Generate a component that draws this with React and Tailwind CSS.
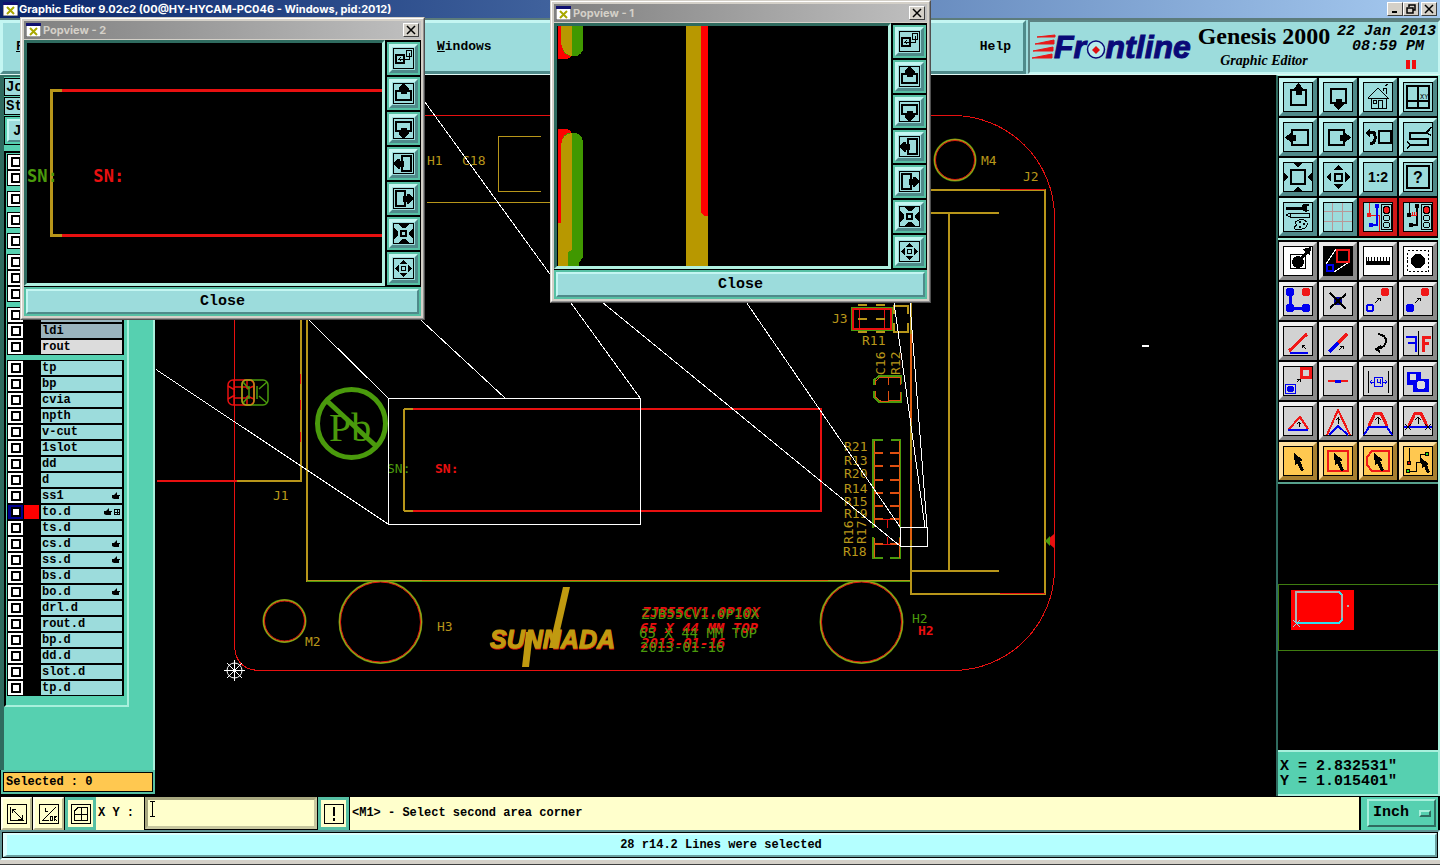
import React from 'react'

const mono = "font-['Liberation_Mono','Courier_New',monospace]"
const cad = "font-['DejaVu_Sans_Mono',monospace]"
const raised = 'border-t-[#c4f6f2] border-l-[#c4f6f2] border-b-[#4f8a8a] border-r-[#4f8a8a]'

const GOLD = '#b8961a'
const RED = '#e81010'
const GREEN = '#4a9a0c'

/* ---------- toolbar glyphs, 30x30 grid ---------- */

const K = '#000'
const B = '#0000f0'
const R = '#f01818'

const tools = [
  { name: 'Pan up', art: <><path d="M8 8h15v15H8z" fill="none" stroke={K} strokeWidth="2" /><path d="M15.500 1l5 6v2h-2v4h-6V9h-2V7z" /></> },
  { name: 'Pan down', art: <><path d="M8 7h15v14H8z" fill="none" stroke={K} strokeWidth="2" /><path d="M15.500 28l5-5v-2h-2v-4h-6v4h-2v2z" /></> },
  {
    name: 'Home',
    art: (
      <g fill="none" stroke={K}>
        <path d="M5 16L15 6l10 10H5M8 16v10h15V16M15 26v-8h4v8M10 18h3v3h-3zM20 9V6h3v6M22 4l3-2" />
      </g>
    ),
  },
  { name: 'Coordinates', art: <><path d="M4 4h22v22H4zM15 4v22M4 19h22" fill="none" stroke={K} strokeWidth="1.500" /><text x="17" y="17" fontSize="7" fontFamily="Liberation Mono">XY</text></> },
  { name: 'Pan left', art: <><path d="M9 8h16v15H9z" fill="none" stroke={K} strokeWidth="2" /><path d="M2 15.500l6-5h2v2h3v6h-3v2H8z" /></> },
  { name: 'Pan right', art: <><path d="M6 8h15v15H6z" fill="none" stroke={K} strokeWidth="2" /><path d="M28 15.500l-6-5h-2v2h-3v6h3v2h2z" /></> },
  { name: 'Previous view', art: <><path d="M16 9h12v12H16z" fill="none" stroke={K} strokeWidth="2" /><path d="M5 10h4q3 0 3 4v3q0 4-5 5" fill="none" stroke={K} strokeWidth="3" /><path d="M2 11l5-5v9z" /></> },
  { name: 'Snake', art: <path d="M26 8l-3 3H7v6h18v6H8l-4-3M26 8l2-3M23 11l5 2M8 23l-4 3" fill="none" stroke={K} strokeWidth="1.500" /> },
  { name: 'Zoom out', art: <><path d="M8 8h14v14H8z" fill="none" stroke={K} strokeWidth="2" /><path d="M10 1h10l-5 4zM10 29h10l-5-4zM1 10v10l4-5zM29 10v10l-4-5z" /></> },
  { name: 'Zoom in', art: <><path d="M11.500 11.500h7v7h-7z" fill="none" stroke={K} strokeWidth="2" /><path d="M10 8h10l-5-5zM10 22h10l-5 5zM8 10v10l-5-5zM22 10v10l5-5z" /></> },
  { name: 'Scale 1:2', art: <text x="15" y="20" textAnchor="middle" fontSize="14" fontWeight="bold" fontFamily="Liberation Sans">1:2</text> },
  { name: 'Help', art: <><path d="M4 4h22v22H4z" fill="none" stroke={K} strokeWidth="1.500" /><text x="15" y="21" textAnchor="middle" fontSize="16" fontWeight="bold" fontFamily="Liberation Sans">?</text></> },
  {
    name: 'Options',
    art: (
      <>
        <path d="M3 5h16v2H3zM19 4q3-3 7-1h-3v5h3q-4 3-7-1z" stroke={K} />
        <path d="M3 13l4-2h19v4H7zM7 11v4" fill="none" stroke={K} />
        <path d="M12 20q7-5 12 0 1 6-5 7-8 2-8-2 4-1 1-5z" fill="none" stroke={K} />
        <circle cx="17" cy="20" r="1" /><circle cx="21" cy="22" r="1" /><circle cx="17" cy="25" r="1" />
      </>
    ),
  },
  { name: 'Grid', art: <path d="M9.500 1v28M19.500 1v28M1 9.500h28M1 19.500h28" stroke="#b89898" strokeWidth="1" /> },
  {
    name: 'Net display',
    tone: 'alert',
    art: (
      <>
        <path d="M6.500 1v12M6 13.500h10.500V29" fill="none" stroke={R} />
        <path d="M14 4v19H8" fill="none" stroke={B} strokeWidth="1.500" />
        <circle cx="14" cy="4" r="2.500" fill={B} /><circle cx="6" cy="13" r="2.500" fill={R} /><circle cx="8" cy="23" r="2.500" fill={B} />
        <path d="M18.500 2.500h10v25h-10z" fill="none" stroke={K} />
        <circle cx="23.500" cy="8" r="3.500" fill={R} stroke={K} /><circle cx="23.500" cy="16" r="3" fill="none" stroke={K} /><circle cx="23.500" cy="23" r="3" fill="none" stroke={K} />
      </>
    ),
  },
  {
    name: 'Net check',
    tone: 'alert',
    art: (
      <>
        <path d="M6.500 1v12M14 4v19H8" fill="none" stroke={K} strokeWidth="1.500" />
        <path d="M8 13.500h6M9.500 10v3M11.500 10v3M13.500 10v3" fill="none" stroke={R} />
        <circle cx="14" cy="4" r="2.500" /><circle cx="6" cy="13" r="2.500" /><circle cx="8" cy="23" r="2.500" />
        <path d="M18.500 2.500h10v25h-10z" fill="none" stroke={K} />
        <circle cx="23.500" cy="8" r="3.500" fill={R} stroke={K} /><circle cx="23.500" cy="16" r="3" fill="none" stroke={K} /><circle cx="23.500" cy="23" r="3" fill="none" stroke={K} />
      </>
    ),
  },
]

const editTools = [
  { name: 'Select feature', tone: 'white', art: <><path d="M7.500 8.500h15v14h-15z" fill="none" stroke={K} /><circle cx="15" cy="16" r="6" /><path d="M18 11l4-5-2-3 8-2-1 8-3-1-4 5z" /></> },
  {
    name: 'Popview',
    tone: 'white',
    art: (
      <>
        <path d="M1 1h28v28H1z" />
        <path d="M3 18L13 3M11 26l15-10" stroke="#fff" />
        <path d="M14 4h12v12H14z" fill="none" stroke={R} strokeWidth="2" />
        <path d="M4 19h6v6H4z" fill="none" stroke={B} strokeWidth="2" />
      </>
    ),
  },
  { name: 'Measure', tone: 'white', art: <path d="M3 11v8h24v-8h-1v4h-2v-4h-1v4h-2v-4h-1v4h-2v-4h-1v4h-2v-4h-1v4h-2v-4h-1v4H9v-4H8v4H6v-4H5v4H4v-4z" /> },
  { name: 'Select area', tone: 'white', art: <><path d="M4.500 4.500h21v21h-21z" fill="none" stroke={K} strokeDasharray="2 2" /><circle cx="15" cy="15" r="7" /></> },
  { name: 'Connect', art: <><path d="M7.500 6v15M7 22.500h16" stroke={B} strokeWidth="3" /><circle cx="7" cy="6" r="4.500" fill={B} /><circle cx="23" cy="6" r="4.500" fill={R} /><circle cx="7" cy="22" r="4.500" fill={B} /><circle cx="23" cy="22" r="4.500" fill={B} /></> },
  { name: 'Delete', art: <><circle cx="15" cy="15" r="4.500" fill="#0000a0" /><path d="M7 7l16 16M23 8L7 22" stroke={K} strokeWidth="2" /></> },
  { name: 'Move', art: <><circle cx="22" cy="6" r="4.500" fill={R} /><circle cx="7" cy="22" r="3.500" fill="none" stroke={B} strokeWidth="2" /><path d="M12 17l5-5M14 12h3v3" fill="none" stroke={K} /></> },
  { name: 'Copy', art: <><circle cx="22" cy="6" r="4.500" fill={R} /><circle cx="7" cy="22" r="4.500" fill={B} /><path d="M12 17l5-5M14 12h3v3" fill="none" stroke={K} /></> },
  { name: 'Rotate line', art: <><path d="M6 25L24 8" stroke={R} strokeWidth="3" /><path d="M7 27h18" stroke={B} strokeWidth="2" /><path d="M23 23l-4-4M19 22v-3h3" fill="none" stroke={K} /></> },
  { name: 'Stretch line', art: <><path d="M6 26l9-9" stroke={B} strokeWidth="3" /><path d="M15 17l9-9" stroke={R} strokeWidth="3" /><path d="M16 24l4-4M17 20h3v3" fill="none" stroke={K} /></> },
  { name: 'Rotate', art: <path d="M15 8q8 1 8 7t-9 8M18 20l-5 3 4 3" fill="none" stroke={K} strokeWidth="2" /> },
  { name: 'Mirror', art: <><path d="M15.500 5v24" stroke={K} /><path d="M3 11h9M12.500 10v16M5 17h7" fill="none" stroke={B} strokeWidth="2" /><path d="M28 11h-8M20 10v16M26 17h-6" fill="none" stroke={R} strokeWidth="3" /></> },
  { name: 'Resize', art: <><path d="M18 2h9v9h-9z" fill="none" stroke={R} strokeWidth="3" /><path d="M2.500 18.500h10v9h-10z" fill="none" stroke={B} /><circle cx="7.500" cy="23" r="3.500" fill={B} /><path d="M14 16l3-3M14 13h3v3" fill="none" stroke={K} /></> },
  { name: 'Break line', art: <><path d="M5 15h20" stroke={R} strokeWidth="2" /><path d="M12 15h6" stroke={B} strokeWidth="3" /></> },
  { name: 'Spacing', art: <><path d="M5.500 5v22M25.500 5v22" stroke={K} /><path d="M7 16.500h5M19 16.500h5M9 14l-2 2 2 2M22 14l2 2-2 2M11.500 11.500h8v9h-8zM14 13v3h3v-3v5" fill="none" stroke={B} /></> },
  { name: 'Substitute', art: <><path d="M4 6h14v7h8v13H10v-7H4z" fill={B} /><circle cx="10" cy="11" r="3.500" fill="#dcdcdc" /><circle cx="18" cy="19" r="4.500" fill="#dcdcdc" /></> },
  { name: 'Angle low', art: <><path d="M6 23l11-12 8 12" fill="none" stroke={R} strokeWidth="2" /><path d="M5 24h20" stroke={B} strokeWidth="2" /><path d="M16 21v-5M14 18l2-2 2 2" fill="none" stroke={K} /></> },
  { name: 'Angle high', art: <><path d="M4 29L15 4l12 25" fill="none" stroke={R} strokeWidth="2" /><path d="M6 29l9-9 10 9" fill="none" stroke={B} strokeWidth="2" /><path d="M15.500 18v-7M13 14l2-2 2 2" fill="none" stroke={K} /></> },
  { name: 'Trapezoid', art: <><path d="M6 20L12 7h6l6 13" fill="none" stroke={R} strokeWidth="3" /><path d="M1 29l5-8h18l5 8" fill="none" stroke={B} strokeWidth="2" /><path d="M15.500 18v-7M12 14l3-3 3 3" fill="none" stroke={K} /></> },
  { name: 'Trapezoid cut', art: <><path d="M6 20L12 7h6l6 13" fill="none" stroke={R} strokeWidth="3" /><path d="M1 21h28" stroke={B} strokeWidth="2" /><path d="M15.500 18v-7M12 14l3-3 3 3M2 18l6 6M8 18l-6 6M22 18l6 6M28 18l-6 6" fill="none" stroke={K} /></> },
  { name: 'Pick', tone: 'amber', art: <path d="M11 7l9 7-3 1 4 9-3 1-4-8-2 3z" /> },
  { name: 'Pick in box', tone: 'amber', art: <><path d="M5 5h20v20H5z" fill="none" stroke={R} strokeWidth="2" /><path d="M11 7l9 7-3 1 4 9-3 1-4-8-2 3z" /></> },
  { name: 'Pick in polygon', tone: 'amber', art: <><path d="M9 5h17v20H9l-5-6v-8z" fill="none" stroke={R} strokeWidth="2" /><path d="M11 7l9 7-3 1 4 9-3 1-4-8-2 3z" /></> },
  {
    name: 'Pick net',
    tone: 'amber',
    art: (
      <>
        <path d="M6.500 2v14M5 25.500h8.500v-9h4v-8H25" fill="none" stroke={K} />
        <circle cx="6" cy="17" r="2" fill="#d00000" stroke={K} /><circle cx="5" cy="25" r="2" fill="#20e020" stroke={K} /><circle cx="24" cy="8" r="2" fill="#20e020" stroke={K} />
        <path d="M18 12l8 6-2 1 3 7-3 1-3-7-2 3z" />
      </>
    ),
  },
]

const tones = {
  face: `bg-[#9cdcdc] ${raised}`,
  alert: 'bg-[#9cdcdc] border-[#d01818]',
  grey: 'bg-[#d2d2d2] border-t-[#f0f0f0] border-l-[#f0f0f0] border-b-[#8a8a8a] border-r-[#8a8a8a]',
  white: 'bg-white border-t-[#e8e8e8] border-l-[#e8e8e8] border-b-[#8a8a8a] border-r-[#8a8a8a]',
  amber: 'bg-[#ffc850] border-t-[#ffe0a0] border-l-[#ffe0a0] border-b-[#a88030] border-r-[#a88030]',
}

function ToolButton({ tool, fallback }) {
  return (
    <button type="button" aria-label={tool.name} className={`h-[38px] border-4 ${tones[tool.tone || fallback]}`}>
      <svg viewBox="0 0 30 30" className="block h-[30px] w-[30px]" shapeRendering="crispEdges">
        <rect x="0.500" y="0.500" width="29" height="29" fill="none" stroke={K} />
        {tool.art}
      </svg>
    </button>
  )
}

/* ---------- popview windows ---------- */

const viewTools = [
  { name: 'Pop out', art: <><path d="M3 7h8v8H3z" fill="none" stroke={K} strokeWidth="2" /><path d="M13.500 2.500h5v6h-5zM5 11.500h11.500V5M8 9l-2 2 2 2" fill="none" stroke={K} /></> },
  { name: 'Up', art: <><path d="M3 8h15v9H3z" fill="none" stroke={K} strokeWidth="2" /><path d="M10.500 0l5 5v2h-2v4h-6V7h-2V5z" /></> },
  { name: 'Down', art: <><path d="M3 4h15v9H3z" fill="none" stroke={K} strokeWidth="2" /><path d="M10.500 21l5-5v-2h-2v-4h-6v4h-2v2z" /></> },
  { name: 'Left', art: <><path d="M9 3h9v15H9z" fill="none" stroke={K} strokeWidth="2" /><path d="M0 10.500l5-5h2v2h4v6H7v2H5z" /></> },
  { name: 'Right', art: <><path d="M3 3h9v15H3z" fill="none" stroke={K} strokeWidth="2" /><path d="M21 10.500l-5-5h-2v2h-4v6h4v2h2z" /></> },
  { name: 'Zoom out', art: <><path d="M8 8h5v5H8z" fill="none" stroke={K} strokeWidth="2" /><path d="M5 1h11l-4 4H9zM5 20h11l-4-4H9zM1 5v11l4-4V9zM20 5v11l-4-4V9z" /></> },
  { name: 'Zoom in', art: <><path d="M8.500 8.500h4v4h-4z" fill="none" stroke={K} /><path d="M7 6h7l-3-4h-1zM7 15h7l-3 4h-1zM6 7v7l-4-3v-1zM15 7v7l4-3v-1z" /></> },
]

function AppIcon() {
  return (
    <svg viewBox="0 0 15 14" className="h-[14px] w-[15px] shrink-0">
      <rect width="15" height="14" fill="#fff" stroke="#444" />
      <rect width="15" height="3" fill="#101070" />
      <path d="M4 5l7 7M11 5l-7 7" stroke="#a8a800" strokeWidth="2" />
    </svg>
  )
}

function WinButton({ label, children }) {
  return (
    <button
      type="button"
      aria-label={label}
      className="flex h-[14px] w-4 items-center justify-center border border-t-white border-l-white border-b-[#404040] border-r-[#404040] bg-[#d4d0c8]"
    >
      <svg viewBox="0 0 10 10" className="h-[10px] w-[10px]" fill="none" stroke="#000" strokeWidth="1.500">
        {children}
      </svg>
    </button>
  )
}

function Popview({ title, place, viewBox, children }) {
  return (
    <section
      aria-label={title}
      className={`absolute flex h-[303px] flex-col border border-t-[#d4d0c8] border-l-[#d4d0c8] border-b-[#505050] border-r-[#505050] bg-[#d4d0c8] ${place}`}
    >
      <div className="flex grow flex-col border border-t-white border-l-white border-b-[#909090] border-r-[#909090] p-[2px]">
        <header className="flex h-[18px] items-center bg-linear-to-r from-[#808080] to-[#c0c0c0] px-[2px]">
          <AppIcon />
          <h2 className="grow pl-[2px] font-['Inter',sans-serif] text-[11px] leading-[18px] font-bold text-[#d4d0c8]">{title}</h2>
          <WinButton label="Close window"><path d="M1 1l8 8M9 1L1 9" /></WinButton>
        </header>
        <div className="mt-px flex grow flex-col bg-black">
          <div className="flex grow">
            <div className="h-[246px] min-w-0 grow border-[3px] border-t-[#2f6b5f] border-l-[#2f6b5f] border-b-[#b0f0e0] border-r-[#b0f0e0]">
              <svg viewBox={viewBox} preserveAspectRatio="xMinYMin slice" className="block h-full w-full" shapeRendering="crispEdges">
                {children}
              </svg>
            </div>
            <div className="flex w-[36px] flex-col items-center gap-[2px] pt-[2px]">
              {viewTools.map((tool) => (
                <button key={tool.name} type="button" aria-label={tool.name} className="h-[33px] w-[33px] border-2 border-[#56c0a4]">
                  <span className={`flex h-full items-center justify-center border-[3px] bg-[#9cdcdc] ${raised}`}>
                    <svg viewBox="0 0 21 21" className="h-[21px] w-[21px]" shapeRendering="crispEdges">
                      <rect x="0.500" y="0.500" width="20" height="20" fill="none" stroke={K} />
                      {tool.art}
                    </svg>
                  </span>
                </button>
              ))}
            </div>
          </div>
          <button type="button" className="h-[29px] border-2 border-[#56c0a4]">
            <span className={`block border-2 bg-[#9cdcdc] text-[15px] leading-[21px] font-bold ${raised} ${mono}`}>Close</span>
          </button>
        </div>
      </div>
    </section>
  )
}

/* ---------- layer list ---------- */

const layerGroups = [
  [{}, {}],
  [{}],
  [{}],
  [{}],
  [{}, {}, {}],
  [{ tint: 'bg-[#9ab4be]' }, { name: 'ldi', tint: 'bg-[#9ab4be]' }, { name: 'rout', tint: 'bg-[#dcdcdc]' }],
  [
    { name: 'tp' },
    { name: 'bp' },
    { name: 'cvia' },
    { name: 'npth' },
    { name: 'v-cut' },
    { name: '1slot' },
    { name: 'dd' },
    { name: 'd' },
    { name: 'ss1', hand: true },
    { name: 'to.d', hand: true, active: true },
    { name: 'ts.d' },
    { name: 'cs.d', hand: true },
    { name: 'ss.d', hand: true },
    { name: 'bs.d' },
    { name: 'bo.d', hand: true },
    { name: 'drl.d' },
    { name: 'rout.d' },
    { name: 'bp.d' },
    { name: 'dd.d' },
    { name: 'slot.d' },
    { name: 'tp.d' },
  ],
]

function LayerRow({ layer }) {
  return (
    <label className="flex h-4 items-center bg-black">
      <span className={`ml-px flex h-[14px] w-[15px] items-center justify-center ${layer.active ? 'bg-[#000090]' : 'bg-white'}`}>
        <input type="checkbox" aria-label={layer.name || 'layer'} className="block h-[10px] w-[10px] appearance-none border-2 border-black bg-white" />
      </span>
      <span className={`ml-px h-[14px] w-[15px] ${layer.active ? 'bg-[#ff0000]' : ''}`} />
      <span className={`ml-[2px] flex h-[14px] w-[81px] items-center gap-[2px] pr-[2px] pl-px ${layer.tint || 'bg-[#9cdcdc]'}`}>
        <span className={`grow text-[12px] leading-[14px] font-bold ${mono}`}>{layer.name}</span>
        {layer.hand && (
          <svg viewBox="0 0 8 8" className="h-2 w-2"><path d="M0 3h2l3-3v3h3v1H7v3H2L0 6z" /></svg>
        )}
        {layer.active && (
          <svg viewBox="0 0 6 6" className="h-[6px] w-[6px]" shapeRendering="crispEdges"><path d="M.500.500h5v5h-5zM3 0v6M0 3h6" fill="none" stroke="#000" /></svg>
        )}
      </span>
    </label>
  )
}

function LayerPanel() {
  return (
    <aside className="flex w-[156px] shrink-0 flex-col bg-black pr-px">
      <div className="flex grow flex-col border-t-2 border-r-2 border-l-4 border-t-[#2f6b5f] border-r-[#a8f0dc] border-l-[#2f6b5f] bg-[#56d0b0]">
        <div className={`text-[14px] font-bold ${mono}`}>
          <p className="mt-px h-[18px] border border-black bg-[#9cdcdc] pl-px leading-[16px]">Job</p>
          <p className="mt-px h-[18px] border border-black bg-[#9cdcdc] pl-px leading-[16px]">Step</p>
          <div className="mt-px h-[29px] border border-black p-[2px]">
            <button type="button" className={`h-full w-full border-2 bg-[#9cdcdc] pl-1 text-left leading-[18px] ${raised}`}>Job Matrix</button>
          </div>
        </div>
        <div className="mt-[6px] w-[125px] border-2 border-t-black border-r-[#a8f0dc] border-b-[#a8f0dc] border-l-black bg-[#56d0b0] pb-[9px]">
          <div className="mt-px mr-[3px] ml-px flex flex-col gap-[5px]">
            {layerGroups.map((group, i) => (
              <div key={i}>
                {group.map((layer, j) => (
                  <LayerRow key={j} layer={layer} />
                ))}
              </div>
            ))}
          </div>
        </div>
      </div>
      <p className={`mb-[2px] ml-px border-2 border-[#56c0a4] text-[12px] leading-[18px] font-bold ${mono}`}>
        <span className="block border border-black bg-[#ffc850] pl-[2px]">Selected : 0</span>
      </p>
    </aside>
  )
}

/* ---------- board ---------- */

const goldLabels = [
  ['H1', 427, 165], ['C18', 462, 165], ['M4', 981, 165], ['J2', 1023, 181], ['J1', 273, 500],
  ['M2', 305, 646], ['H3', 437, 631], ['J3', 832, 323], ['R11', 862, 345], ['R21', 844, 451],
  ['R13', 844, 465], ['R20', 844, 478], ['R14', 844, 493], ['R15', 844, 506], ['R19', 844, 518],
  ['R18', 843, 556],
]

const uprightLabels = [
  ['C16', 885, 375], ['R12', 900, 375], ['R16', 853, 544], ['R17', 866, 544],
]

// text, x, green baseline, red baseline
const silkLines = [
  ['ZJB55CV1.0P10X', 641, 619, 617],
  ['65 X 44 MM TOP', 639, 638, 633],
  ['2013-01-16', 640, 652, 648],
]

const padRows = [453, 466, 480, 493, 506, 519, 544]

function Ring({ cx, cy, r }) {
  return (
    <g fill="none">
      <circle cx={cx} cy={cy} r={r} stroke={GREEN} strokeWidth="2" />
      <circle cx={cx} cy={cy} r={r - 1} stroke={RED} strokeWidth="1" />
      <circle cx={cx} cy={cy} r={r} stroke={GOLD} strokeWidth="1" />
    </g>
  )
}

function Board() {
  return (
    <svg viewBox="156 75 1120 721" preserveAspectRatio="xMinYMin meet" className="block h-full w-full" role="img" aria-label="Board layers">
      <g fill="none" shapeRendering="crispEdges">
        <path d="M234.500 115.500V643.500q0 27 26 27H954.500A102 102 0 0 0 1054.500 570.500V214.500A102 102 0 0 0 954.500 115.500H234" stroke={RED} />
        <path d="M307 202V581H911" stroke={GOLD} strokeWidth="2" />
        <path d="M422 580.500H828" stroke="#e06010" />
        <path d="M307 581.500H911" stroke={GREEN} />
        <path d="M301 202V481H237" stroke={GOLD} strokeWidth="2" />
        <path d="M300.500 374v10M300.500 400v10M300.500 432v10" stroke={RED} />
        <path d="M157 481h80" stroke={RED} strokeWidth="2" />
        <path d="M427 202.500H560M541 136H498v55h43" stroke={GOLD} />
        <path d="M911 190h134v404H911zM911 213h88M949 213V571M911 571h88" stroke={GOLD} strokeWidth="2" />
        <path d="M911 334v88M911 460v80" stroke="#e06010" strokeWidth="2" />
        <path d="M1000 189.500h45M1000 593.500h45" stroke={RED} />
        <path d="M404 409v102" stroke={GOLD} strokeWidth="2" />
        <path d="M404 409h9M404 511h9" stroke={GOLD} strokeWidth="2" />
        <path d="M413 409h408v102H413" stroke={RED} strokeWidth="2" />
      </g>

      {/* J3 and the passives next to it */}
      <g fill="none" shapeRendering="crispEdges" strokeWidth="2">
        <path d="M852 308h40v22h-40z" stroke={GREEN} />
        <path d="M853 309h38v20h-38z" stroke={RED} strokeWidth="2" />
        <path d="M859.500 309v20M884.500 309v20" stroke={RED} strokeWidth="1" />
        <path d="M858 305h9M876 305h9M858 332h9M876 332h9M858 319h9M876 319h9" stroke={GOLD} />
        <path d="M894 314v-8h14v8M894 323v9h14v-9" stroke={GOLD} />
        <path d="M874 385v-5l5-4h22v8M874 391v6l5 5h22v-10" stroke={GREEN} />
        <path d="M875.500 385v-4l5-4h8v8M888.500 391v10h-8l-5-4v-6M888 377.500h12v7M888 400.500h12v-9" stroke="#e05010" strokeWidth="1" />
        <path d="M883 440h-10v88M891 440h9v88M873 537v21h10M900 537v21h-10" stroke={GREEN} />
        <path d="M874.500 441v86M899.500 441v86M874.500 538v20M899.500 538v20" stroke="#e06010" strokeWidth="1" />
        {padRows.map((y) => (
          <path key={y} d={`M874 ${y}h9M890 ${y}h10`} stroke="#e05010" strokeWidth="2" />
        ))}
        <path d="M887.500 519v9M887.500 537v7M883 519.500h8M883 544.500h8" stroke={RED} strokeWidth="1" />
      </g>

      {/* edge marker and overlapping pad */}
      <path d="M1050 537.500l4-3.500v14l-4-3.500z" fill={RED} />
      <path d="M1050 536v10l-5-5z" fill={GREEN} />
      <g fill="none" stroke={RED} strokeWidth="1.500">
        <rect x="228" y="380" width="26" height="25" rx="5" />
        <path d="M228 386l7 4M228 399l7-4M234 380v25M247 380v9M247 405v-9M234 387h13M234 398h13M254 386l-7 3M254 399l-7-3" />
      </g>
      <g fill="none" stroke={GREEN} strokeWidth="1.500">
        <rect x="242" y="380" width="26" height="25" rx="5" />
        <path d="M257 386v13M267 382l-8 7M267 403l-8-7M243 382l6 7M243 403l6-7M249 386v13" />
      </g>
      <rect x="242" y="380" width="12" height="25" rx="4" fill="none" stroke={GOLD} strokeWidth="1.500" />

      <g stroke={GREEN} strokeWidth="5" fill="none">
        <circle cx="351.500" cy="423.500" r="34" />
        <path d="M326 400l51 47" />
      </g>
      <text x="329" y="441" fontSize="40" fill={GREEN} fontFamily="Liberation Serif">Pb</text>

      <Ring cx={284.5} cy={621} r={21} />
      <Ring cx={380.5} cy={622} r={41} />
      <Ring cx={861.5} cy={622} r={41} />
      <Ring cx={955} cy={160} r={20.5} />

      <g stroke="#fff" fill="none">
        <circle cx="234.500" cy="670.500" r="7.500" />
        <path d="M224 670.500h21M234.500 660v21M227 663l15 15M242 663l-15 15" />
      </g>

      <g className={cad} fontSize="13" fill={GOLD}>
        {goldLabels.map(([text, x, y]) => (
          <text key={text} x={x} y={y}>{text}</text>
        ))}
        {uprightLabels.map(([text, x, y]) => (
          <text key={text} x={x} y={y} transform={`rotate(-90 ${x} ${y})`}>{text}</text>
        ))}
        <text x="387" y="473" fill={GREEN}>SN:</text>
        <text x="435" y="473" fill={RED} fontWeight="bold">SN:</text>
        <text x="912" y="623" fill={GREEN}>H2</text>
        <text x="918" y="635" fill={RED} fontWeight="bold">H2</text>
        {silkLines.map(([text, x, greenY, redY]) => (
          <g key={text} fontSize="14">
            <text x={x + 1} y={redY} fill={RED} fontStyle="italic" fontWeight="bold" aria-hidden="true">{text}</text>
            <text x={x} y={greenY} fill={GREEN}>{text}</text>
          </g>
        ))}
      </g>

      {/* maker's mark */}
      <g fill="#c09a10">
        <text x="490" y="649" fontSize="25" fontWeight="bold" fontStyle="italic" fontFamily="Liberation Sans" stroke={RED}>SUNNADA</text>
        <text x="490" y="648" fontSize="25" fontWeight="bold" fontStyle="italic" fontFamily="Liberation Sans" stroke="#c09a10" aria-hidden="true">SUNNADA</text>
        <path d="M563 587h7l-14 61h-7z" />
        <path d="M526 632h7l-4 35h-7z" />
      </g>

      {/* popview leader lines */}
      <g stroke="#fff" fill="none" shapeRendering="crispEdges">
        <path d="M388.500 398.500h252v126h-252zM900.500 527.500h27v19h-27z" />
        <path d="M156 369.500L388 524M28 43l360 355M382 43l258 355M382 284l123 114" />
        <path d="M558 27l342 500M558 266l342 280M889 27l38 500M889 266l36 261" />
        <path d="M1142 346h7" strokeWidth="2" />
      </g>
    </svg>
  )
}

/* ---------- right column ---------- */

function ToolColumn() {
  return (
    <aside className="flex w-[164px] shrink-0 flex-col border-t border-r-2 border-l-2 border-t-[#a8f0dc] border-r-[#a8f0dc] border-l-[#2f6b5f] bg-black">
      <div className="grid grid-cols-4 gap-[2px] border-b-2 border-b-[#a8f0dc] px-px pt-[2px] pb-[2px]">
        {tools.map((tool) => <ToolButton key={tool.name} tool={tool} fallback="face" />)}
      </div>
      <div className="grid grid-cols-4 gap-[2px] border-b-2 border-b-[#56a08c] px-px pt-[2px] pb-[2px]">
        {editTools.map((tool) => <ToolButton key={tool.name} tool={tool} fallback="grey" />)}
      </div>
      <svg viewBox="1278 484 160 265" preserveAspectRatio="xMinYMin meet" className="block min-h-0 w-full grow basis-0" shapeRendering="crispEdges" role="img" aria-label="Overview">
        <path d="M1278.500 584.500h160v66h-160z" fill="none" stroke="#3f7d10" />
        <path d="M1291 590h63v40h-63z" fill="#f00" />
        <path d="M1296 622v-30h43l3 3v24" fill="none" stroke="#b0b0b0" strokeWidth="2" />
        <path d="M1339 592l3 3M1342 618v2l-3 3h-43" fill="none" stroke="#30e0f0" strokeWidth="2" />
        <path d="M1293 620l7 7M1300 620l-7 7" stroke="#90e0e0" />
        <path d="M1347 605h2v2h-2z" fill="#b0b0b0" />
      </svg>
      <div className={`h-[46px] border-t-2 border-b-2 border-t-[#a8f0dc] border-b-[#a8f0dc] bg-[#56d0b0] pt-[7px] pl-[2px] text-[15px] leading-[15px] font-bold ${mono}`}>
        <p>X = 2.832531"</p>
        <p>Y = 1.015401"</p>
      </div>
    </aside>
  )
}

/* ---------- top and bottom bars ---------- */

function Brand() {
  return (
    <div className="flex w-[412px] shrink-0 border-2 border-t-[#5c8484] border-l-[#5c8484] border-b-[#c4f6f2] border-r-[#c4f6f2] bg-[#9cdcdc]">
      <svg viewBox="1030 22 164 50" className="h-[50px] w-[164px] shrink-0" role="img" aria-label="Frontline">
        <path d="M1037 37l18-2v2zM1035 44l19-4v4zM1033 51l20-4v4zM1032 58l20-4v4z" fill="#e81818" stroke="#e81818" />
        <text x="1054" y="58" fontSize="32" fontWeight="bold" fontStyle="italic" fontFamily="Liberation Sans" fill="#0a0a78" stroke="#0a0a78">
          Fr<tspan fill="none" stroke="none">o</tspan>ntline
        </text>
        <circle cx="1096" cy="49.500" r="8.500" fill="#b8ecec" stroke="#0a0a78" strokeWidth="1.500" />
        <path d="M1096 46l4 4-4 4-4-4z" fill="#e01010" />
      </svg>
      <div className="grow text-center font-['Liberation_Serif',serif] font-bold whitespace-nowrap">
        <p className="mt-px text-[24px] leading-[27px]">Genesis 2000</p>
        <p className="text-[14px] leading-[22px] italic">Graphic Editor</p>
      </div>
      <div className={`w-[104px] shrink-0 pt-[2px] text-right text-[15px] leading-[15px] font-bold whitespace-nowrap italic ${mono}`}>
        <p className="pr-[2px]">22 Jan 2013</p>
        <p className="pr-[14px]">08:59 PM</p>
        <div className="mt-[6px] flex justify-end gap-[2px] pr-[22px]">
          <span className="h-[9px] w-1 bg-[#f01010]" />
          <span className="h-[9px] w-1 bg-[#f01010]" />
        </div>
      </div>
    </div>
  )
}

function CommandButton({ label, framed, children }) {
  return (
    <button
      type="button"
      aria-label={label}
      className={`flex h-[33px] w-[31px] shrink-0 items-center justify-center bg-[#ffffcc] ${framed ? 'border-[3px] border-[#56c0a4]' : 'border-2 border-t-[#ffffee] border-l-[#ffffee] border-b-[#b8b890] border-r-[#b8b890]'}`}
    >
      <svg viewBox="0 0 20 20" className="h-5 w-5 shrink-0" fill="none" stroke="#000" shapeRendering="crispEdges">
        <path d="M.500.500h19v19H.500z" />
        {children}
      </svg>
    </button>
  )
}

function CommandBar() {
  return (
    <div className={`flex h-[34px] shrink-0 gap-px bg-black pt-px pl-px text-[12px] font-bold ${mono}`}>
      <CommandButton label="Snap to edge"><path d="M3.500 3v13.500H17M5 5l10 10M5.500 9V5.500H9M15.500 11v4.500H11" /></CommandButton>
      <CommandButton label="Angle"><path d="M4 16.500h6M3 17L17 3M6.500 4v3.500H9M11.500 12.500h2v4h-2zM15.500 12v5M18 12l-3 2 3 3" /></CommandButton>
      <CommandButton label="Grid snap" framed><path d="M7 3.500h9.500v13h-13V7zM10.500 3v14M3 10.500h14" /></CommandButton>
      <label htmlFor="xy" className="-ml-px w-[48px] bg-[#ffffcc] pl-[2px] leading-[32px] whitespace-nowrap">X Y :</label>
      <div className="relative h-[32px] w-[172px]">
        <input id="xy" type="text" className="h-full w-full border-[3px] border-t-[#a8a880] border-l-[#a8a880] border-b-[#c8c8a0] border-r-[#c8c8a0] bg-[#ffffcc] px-1 outline-none" />
        <svg viewBox="0 0 7 16" className="pointer-events-none absolute top-1 left-1 h-4 w-[7px]" fill="none" stroke="#000" shapeRendering="crispEdges">
          <path d="M1 .500h5M3.500 0v16M1 15.500h5" />
        </svg>
      </div>
      <CommandButton label="Alert" framed><path d="M10 3v9M10 14v3" strokeWidth="2" /></CommandButton>
      <output className="grow bg-[#ffffcc] pl-[2px] leading-[32px]">&lt;M1&gt; - Select second area corner</output>
      <div className="ml-px mr-[2px] w-[77px] bg-[#56d0b0] py-[2px] pr-[2px] pl-[6px]">
        <div className="flex h-[28px] items-center border-2 border-t-[#a8f0dc] border-l-[#a8f0dc] border-b-[#2f6b5f] border-r-[#2f6b5f] pl-[4px]">
          <select aria-label="Units" className="w-[46px] appearance-none bg-transparent text-[15px] font-bold outline-none">
            <option>Inch</option>
            <option>MM</option>
          </select>
          <span className="h-[7px] w-3 shrink-0 border-2 border-t-[#a8f0dc] border-l-[#a8f0dc] border-b-[#2f6b5f] border-r-[#2f6b5f]" />
        </div>
      </div>
    </div>
  )
}

export default function App() {
  return (
    <div className="relative flex h-screen min-h-[865px] flex-col overflow-hidden bg-[#d4d0c8] text-black">
      <header className="flex h-[18px] shrink-0 items-center bg-linear-to-r from-[#0a246a] to-[#a6caf0] px-[3px]">
        <AppIcon />
        <h1 className="grow pl-px font-['Inter',sans-serif] text-[11px] leading-[18px] font-bold text-white">
          Graphic Editor 9.02c2 (00@HY-HYCAM-PC046 - Windows, pid:2012)
        </h1>
        <WinButton label="Minimize"><path d="M2 8h5" strokeWidth="2" /></WinButton>
        <WinButton label="Restore"><path d="M3 3V1h6v5H7M1 4h6v5H1z" /></WinButton>
        <span className="w-[2px]" />
        <WinButton label="Close"><path d="M1 1l8 8M9 1L1 9" /></WinButton>
      </header>

      <div className="flex h-[57px] shrink-0 gap-[2px] border-t-2 border-b border-t-[#5c7c7c] border-b-[#e0f8f4] bg-[#9cdcdc]">
        <nav className={`flex grow items-center border-[3px] bg-[#9cdcdc] text-[13px] font-bold ${raised} ${mono}`}>
          <a href="#file" className="ml-[13px] w-[421px]"><u>F</u>ile</a>
          <a href="#windows"><u>W</u>indows</a>
          <a href="#help" className="mr-[12px] ml-auto">Help</a>
        </nav>
        <Brand />
      </div>

      <main className="flex min-h-0 grow bg-black">
        <LayerPanel />
        <div className="min-w-0 grow"><Board /></div>
        <ToolColumn />
      </main>

      <CommandBar />
      <div className="h-[30px] shrink-0 border-2 border-t-[#5f9494] border-r-[#e8ffff] border-b-[#e8ffff] border-l-[#5f9494]">
        <p className={`h-full border border-black bg-[#b4ffff] text-center text-[12px] font-bold ${mono}`}>
          <span className="block h-full border-t-2 border-r-2 border-b-2 border-l-4 border-t-[#dcffff] border-r-[#6aa0a0] border-b-[#6aa0a0] border-l-[#dcffff] leading-[20px]">
            28 r14.2 Lines were selected
          </span>
        </p>
      </div>
      <div className="h-[5px] shrink-0 border-b border-b-[#404040] bg-[#d4d0c8]" />

      <Popview title="Popview - 2" place="top-[17px] left-[20px] w-[405px]" viewBox="27 43 353 240">
        <path d="M62 90.500h320M62 234.500h320" stroke={RED} strokeWidth="3" />
        <path d="M62 90.500H51.500v144H62" fill="none" stroke={GOLD} strokeWidth="3" />
        <g className={cad} fontSize="17" fontWeight="bold">
          <text x="27" y="181" fill={GREEN}>SN:</text>
          <text x="93" y="181" fill={RED}>SN:</text>
        </g>
      </Popview>

      <Popview title="Popview - 1" place="top-0 left-[550px] w-[381px]" viewBox="557 26 329 240">
        <path d="M558 26h14v28q-2 5-7 5h-7z" fill="#f00" />
        <path d="M562 26h21v20q0 10-10 10t-11-10z" fill="#409800" />
        <path d="M561 26h11v30q-8-1-11-12z" fill="#b89800" />
        <path d="M558 128h7q6 1 7 6v90h-14z" fill="#f00" />
        <path d="M562 142q0-10 10-10t11 10v114l-4 5v6h-17z" fill="#409800" />
        <path d="M561 144q1-10 11-12v116l-4 3v16h-10v-45h3z" fill="#b89800" />
        <path d="M685 26h22v241h-22z" fill="#b89800" />
        <path d="M700 26h7v189h-2q-5-1-5-7z" fill="#f00" />
      </Popview>
    </div>
  )
}
